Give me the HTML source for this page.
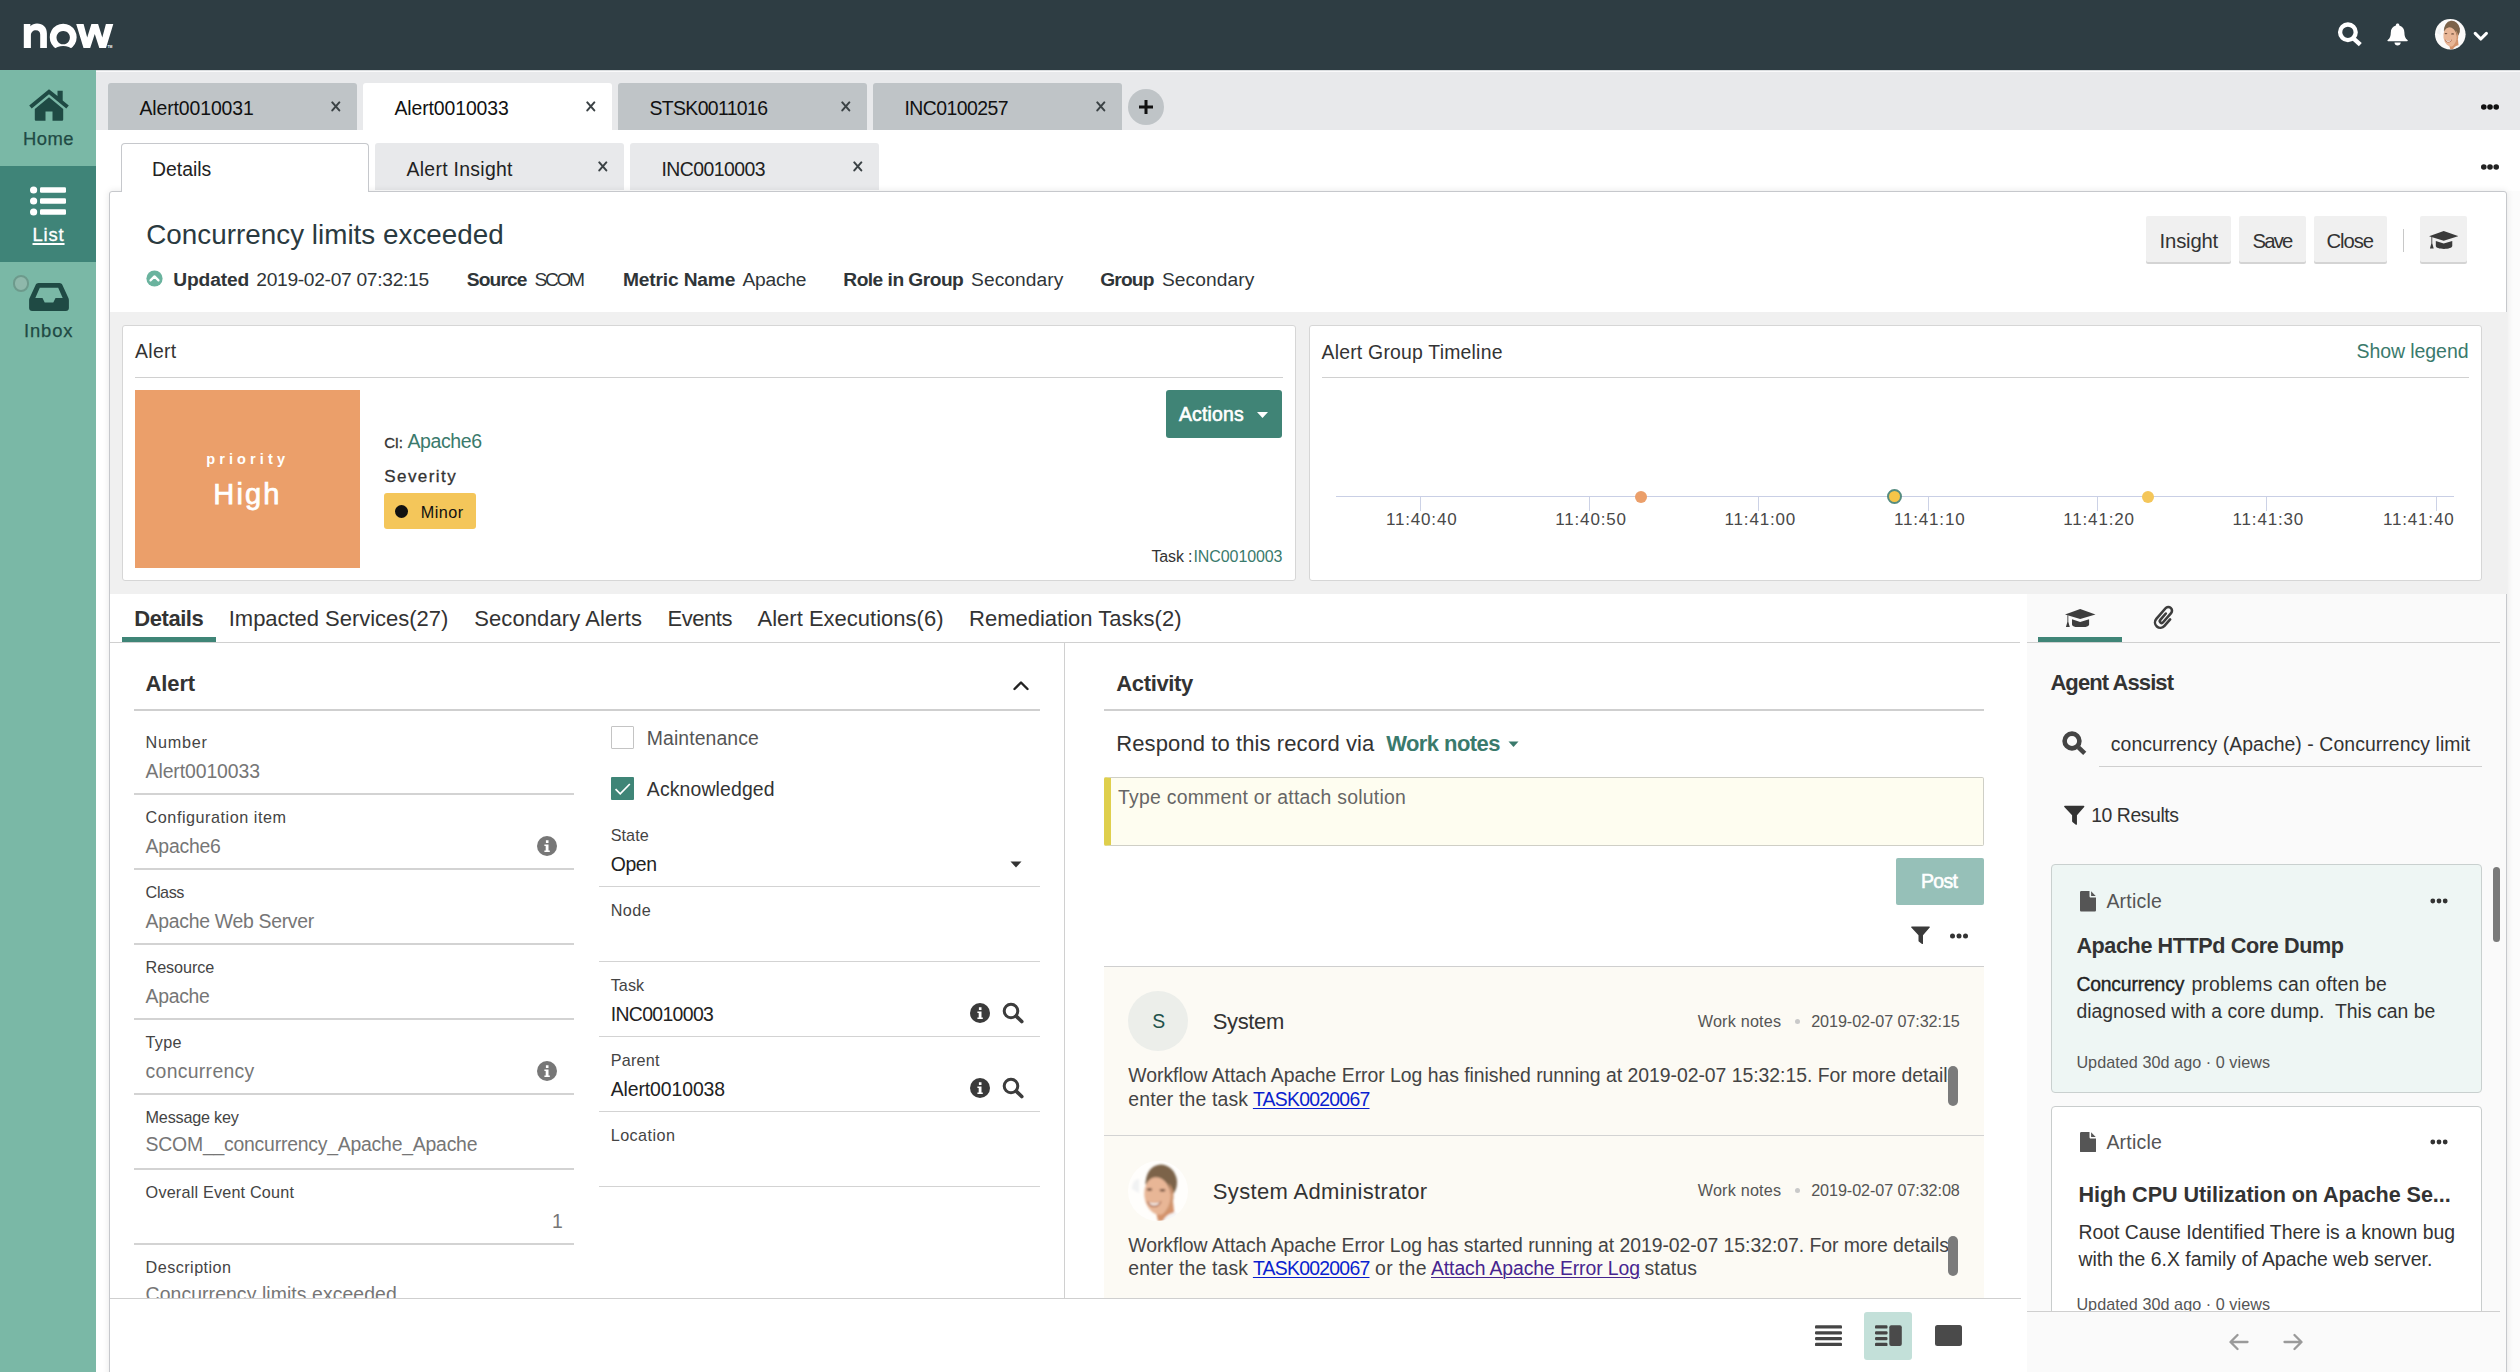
<!DOCTYPE html>
<html><head><meta charset="utf-8"><title>Alert0010033</title>
<style>
html,body{margin:0;padding:0;}
body{width:2520px;height:1372px;overflow:hidden;position:relative;background:#fff;font-family:"Liberation Sans",sans-serif;}
.b{position:absolute;box-sizing:border-box;display:block;}
.t{position:absolute;white-space:nowrap;line-height:1;display:block;}
a{color:inherit;}
</style></head><body>
<div class="b" style="left:0px;top:0px;width:2520px;height:70px;background:#2e3d43;"></div>
<div class="b" style="left:0px;top:70px;width:96px;height:1302px;background:#7ab8a6;"></div>
<div class="b" style="left:0px;top:166px;width:96px;height:96px;background:#3f8478;"></div>
<div class="b" style="left:96px;top:70px;width:2424px;height:60px;background:#e8e9eb;"></div>
<div class="b" style="left:96px;top:70px;width:2424px;height:1px;background:#d9dcde;"></div>
<div class="b" style="left:96px;top:71px;width:2424px;height:1px;background:#f9f9fa;"></div>
<div class="b" style="left:96px;top:130px;width:2424px;height:1242px;background:#fff;"></div>
<div class="b" style="left:2507px;top:191px;width:13px;height:1181px;background:#fcfcfc;"></div>
<div class="b" style="left:108px;top:83px;width:249px;height:47px;background:#bfc4c7;border-radius:3px 3px 0 0;"></div>
<div class="b" style="left:363px;top:83px;width:249px;height:47px;background:#fff;border-radius:3px 3px 0 0;"></div>
<div class="b" style="left:618px;top:83px;width:249px;height:47px;background:#bfc4c7;border-radius:3px 3px 0 0;"></div>
<div class="b" style="left:873px;top:83px;width:249px;height:47px;background:#bfc4c7;border-radius:3px 3px 0 0;"></div>
<div class="b" style="left:375px;top:143px;width:249px;height:47px;background:#e8e9eb;border-radius:3px 3px 0 0;"></div>
<div class="b" style="left:630px;top:143px;width:249px;height:47px;background:#e8e9eb;border-radius:3px 3px 0 0;"></div>
<div class="b" style="left:108.5px;top:190.5px;width:2398.5px;height:1190px;background:#fff;border:1px solid #c6c8cc;border-radius:3px 3px 0 0;box-shadow:0 0 7px rgba(0,0,0,0.10);"></div>
<div class="b" style="left:120.5px;top:143px;width:248.5px;height:49px;background:#fff;border:1px solid #c6c8cc;border-bottom:none;border-radius:4px 4px 0 0;"></div>
<div class="b" style="left:109.5px;top:312px;width:2397px;height:282px;background:#f0f0f0;"></div>
<div class="b" style="left:122px;top:324.5px;width:1173.5px;height:256.5px;background:#fff;border:1px solid #d6d6d6;border-radius:3px;"></div>
<div class="b" style="left:1308.5px;top:324.5px;width:1173.5px;height:256.5px;background:#fff;border:1px solid #d6d6d6;border-radius:3px;"></div>
<div class="b" style="left:2027px;top:594px;width:479px;height:778px;background:#fafafa;"></div>
<svg class="b" style="left:20px;top:20px;" width="100" height="30" viewBox="0 0 100 30">
<g fill="#fff">
<path d="M3.8 28.1V3.9h6.6v2.3C12 4.300 14.400 3.400 17 3.400c6 0 9.900 3.800 9.900 10V28.100h-6.700V14.800c0-3-1.500-4.600-4.300-4.600-2.900 0-5 2-5 5.200v12.700z"/>
<path fill-rule="evenodd" d="M43.2 3.800a13.450 13.450 0 1 0 0.010 0zM43.200 10.900a6.700 6.700 0 1 1-0.010 0z"/>
<path d="M56.2 3.900h7.400l3.600 13.600 4.200-13.600h6.700l4.200 13.600 3.600-13.600h7.400L86 28.100h-6.700l-4.550-14.100-4.550 14.100h-6.700z"/>
</g>
<circle cx="43.2" cy="41.2" r="15.2" fill="#2e3d43"/>
<text x="87.400" y="27.900" font-size="3.400" fill="#fff" font-family="Liberation Sans" font-weight="700">TM</text>
</svg>
<svg class="b" style="left:2330px;top:10px;" width="170" height="50" viewBox="2330 10 170 50">
<circle cx="2347.900" cy="32.300" r="7.800" fill="none" stroke="#fff" stroke-width="4.300"/>
<path d="M2353.600 38.600l6.700 6" stroke="#fff" stroke-width="4.300" stroke-linecap="butt"/>
<path fill="#fff" d="M2397.600 23.400c1 0 1.700.7 1.700 1.600v.5c3.200.9 5.100 3.600 5.100 7 0 3.900.9 5.900 3.100 7.600.5.400.3 1.200-.4 1.200h-19c-.7 0-.9-.8-.4-1.200 2.200-1.700 3.100-3.700 3.100-7.600 0-3.400 1.900-6.100 5.100-7v-.5c0-.9.700-1.600 1.700-1.600zM2394.500 42.500h6.200c0 1.700-1.400 3-3.100 3s-3.100-1.300-3.100-3z"/>

<path d="M2475.200 33.400l5.600 5.600 5.600-5.600" fill="none" stroke="#fff" stroke-width="3.100" stroke-linecap="round" stroke-linejoin="round"/>
</svg>
<svg class="b" style="left:2434.3999999999996px;top:18.3px;" width="32.6" height="32.6" viewBox="2434.3999999999996 18.3 32.6 32.6">
<defs><clipPath id="ch"><circle cx="2450.7" cy="34.6" r="15.3"/></clipPath><filter id="fh" x="-20%" y="-20%" width="140%" height="140%"><feGaussianBlur stdDeviation="0.800"/></filter></defs>
<g clip-path="url(#ch)"><rect x="2434.3999999999996" y="18.3" width="32.6" height="32.6" fill="#fbfaf9"/>
<g transform="translate(2435.3999999999996,19.3) scale(0.5100)" filter="url(#fh)">
<path d="M4 28c0-6 3-10 7-10v14z" fill="#f1f2f3"/>
<path d="M27 47l18-7 2 20H30z" fill="#d4926b"/>
<path d="M35 60c2-5 7-8 13-9l6 9z" fill="#f6f6f6"/>
<ellipse cx="33.500" cy="21" rx="15.500" ry="17.500" transform="rotate(-8 33.500 21)" fill="#7c634a"/>
<ellipse cx="29.800" cy="35" rx="13.300" ry="19" transform="rotate(-10 29.800 35)" fill="#e8b696"/>
<path d="M17.500 24c2-5 6-8 11-8.500 5-.5 10 1 13 5 1-4-1-8-5-10-5-2-12-1-16 3-2 3-3.500 7-3 10.500z" fill="#7c634a"/>
<path d="M40.500 22c2.500 6 3 13 1 20-1.500 5-4.500 9.500-8.500 13 7-3 11.500-9 12.500-18 .5-6-1-11-5-15z" fill="#cf956f"/>
<ellipse cx="21.500" cy="28.500" rx="2.800" ry="1.200" fill="#6b4a38"/><ellipse cx="34.500" cy="29.200" rx="3" ry="1.200" fill="#6b4a38"/>
<path d="M19 40c4 2.500 10 2.500 14.500 0-1 4-4 6-7.500 6s-6-2-7-6z" fill="#a8664a"/>
<path d="M20.500 41c3.500 1.600 8 1.600 11.500 0-1 2.300-3.200 3.400-5.800 3.400s-4.700-1.100-5.700-3.400z" fill="#fdf8f4"/>
</g></g></svg>
<svg class="b" style="left:28px;top:88px;" width="42" height="34" viewBox="0 0 42 34"><g fill="#1f4a44">
<path d="M21 1.200L1.200 17.400l2.500 3 17.300-14.200 17.300 14.200 2.500-3-6.100-5V2.800h-5.200v5.300z"/>
<path d="M21 9.300L6.800 21v10.400c0 .8.600 1.400 1.400 1.400h9.300v-9.200h7v9.200h9.300c.8 0 1.400-.6 1.400-1.400V21z"/></g></svg>
<span class="t" style="left:23.10px;top:130.00px;font-size:18.4px;color:#1f4a44;letter-spacing:0.473px;-webkit-text-stroke:0.250px #1f4a44;">Home</span>
<svg class="b" style="left:29px;top:185px;" width="38" height="32" viewBox="0 0 38 32"><g fill="#fff">
<circle cx="4.600" cy="5" r="3.600"/><circle cx="4.600" cy="16" r="3.600"/><circle cx="4.600" cy="27" r="3.600"/>
<rect x="11" y="2.200" width="26" height="5.600" rx="1.200"/><rect x="11" y="13.200" width="26" height="5.600" rx="1.200"/><rect x="11" y="24.200" width="26" height="5.600" rx="1.200"/></g></svg>
<span class="t" style="left:32.50px;top:226.00px;font-size:18.4px;color:#fff;letter-spacing:0.856px;-webkit-text-stroke:0.350px #fff;text-decoration:underline;text-decoration-thickness:1.500px;text-underline-offset:2px;">List</span>
<svg class="b" style="left:28px;top:282px;" width="42" height="30" viewBox="0 0 42 30"><path fill="#1f4a44" d="M10.500 1h21c1.200 0 2.300.7 2.800 1.800l6.200 13.500c.3.600.4 1.200.4 1.900V26c0 1.700-1.300 3-3 3H4.100c-1.700 0-3-1.300-3-3v-7.800c0-.7.100-1.300.4-1.900L7.700 2.800C8.200 1.700 9.300 1 10.500 1zm1.300 4.800L7.300 16h7.200l2.200 4.400h8.600l2.200-4.400h7.200L30.200 5.800z"/></svg>
<div class="b" style="left:12.5px;top:275px;width:16.5px;height:16.5px;background:#8fb8ab;border-radius:50%;border:2px solid #6d9a8c;"></div>
<span class="t" style="left:24.00px;top:322.00px;font-size:18.4px;color:#1f4a44;letter-spacing:0.872px;-webkit-text-stroke:0.250px #1f4a44;">Inbox</span>
<span class="t" style="left:139.50px;top:99.00px;font-size:19.4px;color:#111;letter-spacing:-0.100px;">Alert0010031</span>
<svg class="b" style="left:331.4px;top:100.9px;" width="10" height="11" viewBox="0 0 10 11"><path d="M1.300 1.400l7 8M8.300 1.400l-7 8" stroke="#3b4245" stroke-width="2" stroke-linecap="round" fill="none"/></svg>
<span class="t" style="left:394.50px;top:99.00px;font-size:19.4px;color:#111;letter-spacing:-0.100px;">Alert0010033</span>
<svg class="b" style="left:586.4px;top:100.9px;" width="10" height="11" viewBox="0 0 10 11"><path d="M1.300 1.400l7 8M8.300 1.400l-7 8" stroke="#3b4245" stroke-width="2" stroke-linecap="round" fill="none"/></svg>
<span class="t" style="left:649.50px;top:99.00px;font-size:19.4px;color:#111;letter-spacing:-0.625px;">STSK0011016</span>
<svg class="b" style="left:841.4px;top:100.9px;" width="10" height="11" viewBox="0 0 10 11"><path d="M1.300 1.400l7 8M8.300 1.400l-7 8" stroke="#3b4245" stroke-width="2" stroke-linecap="round" fill="none"/></svg>
<span class="t" style="left:904.50px;top:99.00px;font-size:19.4px;color:#111;letter-spacing:-0.547px;">INC0100257</span>
<svg class="b" style="left:1096.4px;top:100.9px;" width="10" height="11" viewBox="0 0 10 11"><path d="M1.300 1.400l7 8M8.300 1.400l-7 8" stroke="#3b4245" stroke-width="2" stroke-linecap="round" fill="none"/></svg>
<div class="b" style="left:1128px;top:88.5px;width:36px;height:36px;background:#bfc4c7;border-radius:50%;"></div>
<svg class="b" style="left:1138px;top:98.5px;" width="16" height="16" viewBox="0 0 16 16"><path d="M8 1v14M1 8h14" stroke="#111" stroke-width="3"/></svg>
<svg class="b" style="left:2480px;top:102.5px;" width="20" height="8" viewBox="0 0 20 8"><circle cx="3.8" cy="4" r="2.8" fill="#111"/><circle cx="10.0" cy="4" r="2.8" fill="#111"/><circle cx="16.2" cy="4" r="2.8" fill="#111"/></svg>
<svg class="b" style="left:2480px;top:162.5px;" width="20" height="8" viewBox="0 0 20 8"><circle cx="3.8" cy="4" r="2.8" fill="#222"/><circle cx="10.0" cy="4" r="2.8" fill="#222"/><circle cx="16.2" cy="4" r="2.8" fill="#222"/></svg>
<span class="t" style="left:152.00px;top:160.00px;font-size:19.4px;color:#222;">Details</span>
<span class="t" style="left:406.50px;top:160.00px;font-size:19.4px;color:#222;letter-spacing:0.297px;">Alert Insight</span>
<span class="t" style="left:661.50px;top:160.00px;font-size:19.4px;color:#222;letter-spacing:-0.547px;">INC0010003</span>
<svg class="b" style="left:598.2px;top:160.9px;" width="10" height="11" viewBox="0 0 10 11"><path d="M1.300 1.400l7 8M8.300 1.400l-7 8" stroke="#3b4245" stroke-width="2" stroke-linecap="round" fill="none"/></svg>
<svg class="b" style="left:853.2px;top:160.9px;" width="10" height="11" viewBox="0 0 10 11"><path d="M1.300 1.400l7 8M8.300 1.400l-7 8" stroke="#3b4245" stroke-width="2" stroke-linecap="round" fill="none"/></svg>
<span class="t" style="left:146.25px;top:221.00px;font-size:27.8px;color:#2a3a40;letter-spacing:0.022px;">Concurrency limits exceeded</span>
<svg class="b" style="left:145.5px;top:270px;" width="17" height="17" viewBox="0 0 17 17"><circle cx="8.500" cy="8.500" r="8.100" fill="#6ab39e"/><path d="M4.500 10.400l4-4 4 4" fill="none" stroke="#fff" stroke-width="2.200" stroke-linecap="round" stroke-linejoin="round"/></svg>
<span class="t" style="left:173.25px;top:270.00px;font-size:19.2px;color:#2f3538;font-weight:700;letter-spacing:-0.133px;">Updated</span>
<span class="t" style="left:256.25px;top:270.00px;font-size:19.2px;color:#2f3538;letter-spacing:-0.294px;">2019-02-07 07:32:15</span>
<span class="t" style="left:466.75px;top:270.00px;font-size:19.2px;color:#2f3538;font-weight:700;letter-spacing:-0.868px;">Source</span>
<span class="t" style="left:534.50px;top:270.00px;font-size:19.2px;color:#2f3538;letter-spacing:-2.367px;">SCOM</span>
<span class="t" style="left:623.00px;top:270.00px;font-size:19.2px;color:#2f3538;font-weight:700;letter-spacing:-0.168px;">Metric Name</span>
<span class="t" style="left:742.50px;top:270.00px;font-size:19.2px;color:#2f3538;letter-spacing:-0.225px;">Apache</span>
<span class="t" style="left:843.30px;top:270.00px;font-size:19.2px;color:#2f3538;font-weight:700;letter-spacing:-0.527px;">Role in Group</span>
<span class="t" style="left:971.10px;top:270.00px;font-size:19.2px;color:#2f3538;letter-spacing:0.050px;">Secondary</span>
<span class="t" style="left:1100.30px;top:270.00px;font-size:19.2px;color:#2f3538;font-weight:700;letter-spacing:-0.872px;">Group</span>
<span class="t" style="left:1161.90px;top:270.00px;font-size:19.2px;color:#2f3538;letter-spacing:0.088px;">Secondary</span>
<div class="b" style="left:2145.5px;top:216px;width:85.9px;height:46px;background:#f0f0f0;border-radius:2px;box-shadow:0 2px 0.500px rgba(0,0,0,0.170);"></div>
<div class="b" style="left:2238.6px;top:216px;width:67px;height:46px;background:#f0f0f0;border-radius:2px;box-shadow:0 2px 0.500px rgba(0,0,0,0.170);"></div>
<div class="b" style="left:2313.5px;top:216px;width:73.5px;height:46px;background:#f0f0f0;border-radius:2px;box-shadow:0 2px 0.500px rgba(0,0,0,0.170);"></div>
<div class="b" style="left:2420px;top:216px;width:46.7px;height:46px;background:#f0f0f0;border-radius:2px;box-shadow:0 2px 0.500px rgba(0,0,0,0.170);"></div>
<div class="b" style="left:2403px;top:228.5px;width:1px;height:23.0px;background:#c8c8c8;"></div>
<span class="t" style="left:2159.60px;top:231.00px;font-size:20.3px;color:#333;letter-spacing:-0.185px;">Insight</span>
<span class="t" style="left:2252.50px;top:231.00px;font-size:20.3px;color:#333;letter-spacing:-1.823px;">Save</span>
<span class="t" style="left:2326.50px;top:231.00px;font-size:20.3px;color:#333;letter-spacing:-1.100px;">Close</span>
<svg class="b" style="left:2428.8px;top:230.5px;" width="29.5" height="18" viewBox="0 0 30.500 18.700"><g fill="#3a3a3a"><path d="M0 5.400L15.200 0l15.300 5.400-15.300 4.700z"/><path d="M7 10.300l8.200 2.700 8.900-2.700v5.300c0 1.700-4 3-8.600 3S7 17.300 7 15.600z"/><path d="M2.400 6.300h.9v6.500l1.500 5.300H.900l1.500-5.300z"/></g></svg>
<span class="t" style="left:135.00px;top:342.00px;font-size:19.4px;color:#333;letter-spacing:0.340px;">Alert</span>
<div class="b" style="left:135px;top:376.7px;width:1147.5px;height:1.2px;background:#d0d0d0;"></div>
<div class="b" style="left:135px;top:390px;width:225px;height:178px;background:#eb9f6a;"></div>
<span class="t" style="left:206.25px;top:452.00px;font-size:14.5px;color:#fff;font-weight:700;letter-spacing:4.115px;">priority</span>
<span class="t" style="left:213.25px;top:480.00px;font-size:29.0px;color:#fff;letter-spacing:2.203px;-webkit-text-stroke:0.750px #fff;">High</span>
<span class="t" style="left:384.25px;top:435.00px;font-size:15.0px;color:#333;letter-spacing:-0.209px;-webkit-text-stroke:0.300px #333;">CI:</span>
<span class="t" style="left:407.50px;top:432.00px;font-size:19.5px;color:#3a7a6c;letter-spacing:-0.413px;">Apache6</span>
<span class="t" style="left:384.25px;top:468.00px;font-size:17.0px;color:#333;letter-spacing:1.442px;-webkit-text-stroke:0.300px #333;">Severity</span>
<div class="b" style="left:384.25px;top:493.25px;width:91.25px;height:35.5px;background:#f4c65a;border-radius:3px;"></div>
<div class="b" style="left:395.25px;top:505.25px;width:13px;height:13px;background:#111;border-radius:50%;"></div>
<span class="t" style="left:420.75px;top:504.00px;font-size:16.2px;color:#111;letter-spacing:0.498px;">Minor</span>
<div class="b" style="left:1166px;top:390px;width:116px;height:47.5px;background:#408476;border-radius:3px;"></div>
<span class="t" style="left:1179.00px;top:405.00px;font-size:19.4px;color:#fff;letter-spacing:0.180px;-webkit-text-stroke:0.600px #fff;">Actions</span>
<svg class="b" style="left:1256px;top:411px;" width="13" height="8" viewBox="0 0 13 8"><path d="M1 1h11L6.500 7z" fill="#fff"/></svg>
<span class="t" style="left:1151.50px;top:549.00px;font-size:16.0px;color:#333;letter-spacing:-0.158px;">Task :</span>
<span class="t" style="left:1193.50px;top:549.00px;font-size:16.0px;color:#3a7a6c;letter-spacing:-0.094px;">INC0010003</span>
<span class="t" style="left:1321.50px;top:343.00px;font-size:19.4px;color:#333;letter-spacing:0.220px;">Alert Group Timeline</span>
<span class="t" style="left:2356.50px;top:342.00px;font-size:19.5px;color:#3a7a6c;letter-spacing:-0.075px;">Show legend</span>
<div class="b" style="left:1321.5px;top:376.7px;width:1147.0px;height:1.2px;background:#d0d0d0;"></div>
<div class="b" style="left:1336px;top:496px;width:1118px;height:1px;background:#c9cfe5;"></div>
<div class="b" style="left:1419.7px;top:497px;width:1.2px;height:14.300000000000011px;background:#ccd2e6;"></div>
<span class="t" style="left:1386.00px;top:511.00px;font-size:17.0px;color:#484848;letter-spacing:0.814px;">11:40:40</span>
<div class="b" style="left:1589.0px;top:497px;width:1.2px;height:14.300000000000011px;background:#ccd2e6;"></div>
<span class="t" style="left:1555.30px;top:511.00px;font-size:17.0px;color:#484848;letter-spacing:0.814px;">11:40:50</span>
<div class="b" style="left:1758.3px;top:497px;width:1.2px;height:14.300000000000011px;background:#ccd2e6;"></div>
<span class="t" style="left:1724.60px;top:511.00px;font-size:17.0px;color:#484848;letter-spacing:0.814px;">11:41:00</span>
<div class="b" style="left:1927.7px;top:497px;width:1.2px;height:14.300000000000011px;background:#ccd2e6;"></div>
<span class="t" style="left:1894.00px;top:511.00px;font-size:17.0px;color:#484848;letter-spacing:0.814px;">11:41:10</span>
<div class="b" style="left:2097.0px;top:497px;width:1.2px;height:14.300000000000011px;background:#ccd2e6;"></div>
<span class="t" style="left:2063.30px;top:511.00px;font-size:17.0px;color:#484848;letter-spacing:0.814px;">11:41:20</span>
<div class="b" style="left:2266.2999999999997px;top:497px;width:1.2px;height:14.300000000000011px;background:#ccd2e6;"></div>
<span class="t" style="left:2232.60px;top:511.00px;font-size:17.0px;color:#484848;letter-spacing:0.814px;">11:41:30</span>
<div class="b" style="left:2435.7px;top:497px;width:1.2px;height:14.300000000000011px;background:#ccd2e6;"></div>
<span class="t" style="left:2383.00px;top:511.00px;font-size:17.0px;color:#484848;letter-spacing:0.814px;">11:41:40</span>
<div class="b" style="left:1635px;top:490.5px;width:12px;height:12px;background:#eb9f6a;border-radius:50%;"></div>
<div class="b" style="left:1886.9px;top:488.9px;width:15px;height:15px;background:#f6c548;border-radius:50%;border:2px solid #568c80;"></div>
<div class="b" style="left:2141.5px;top:490.5px;width:12px;height:12px;background:#f4c65a;border-radius:50%;"></div>
<span class="t" style="left:134.25px;top:608.00px;font-size:22.0px;color:#333;font-weight:700;letter-spacing:-0.441px;">Details</span>
<span class="t" style="left:228.75px;top:608.00px;font-size:22.0px;color:#333;letter-spacing:-0.029px;">Impacted Services(27)</span>
<span class="t" style="left:474.25px;top:608.00px;font-size:22.0px;color:#333;letter-spacing:0.096px;">Secondary Alerts</span>
<span class="t" style="left:667.50px;top:608.00px;font-size:22.0px;color:#333;letter-spacing:-0.452px;">Events</span>
<span class="t" style="left:757.50px;top:608.00px;font-size:22.0px;color:#333;letter-spacing:0.008px;">Alert Executions(6)</span>
<span class="t" style="left:969.00px;top:608.00px;font-size:22.0px;color:#333;letter-spacing:0.008px;">Remediation Tasks(2)</span>
<div class="b" style="left:109.5px;top:642px;width:1910.5px;height:1.2px;background:#d0d0d0;"></div>
<div class="b" style="left:121.75px;top:637px;width:94px;height:5px;background:#3f8577;"></div>
<div class="b" style="left:2027px;top:642px;width:473px;height:1.2px;background:#d0d0d0;"></div>
<div class="b" style="left:2038.2px;top:637.3px;width:84px;height:4.7px;background:#3f8577;"></div>
<svg class="b" style="left:2065.1px;top:608.7px;" width="30.5" height="18.7" viewBox="0 0 30.500 18.700"><g fill="#3d3d3d"><path d="M0 5.400L15.200 0l15.300 5.400-15.300 4.700z"/><path d="M7 10.300l8.200 2.700 8.900-2.700v5.300c0 1.700-4 3-8.600 3S7 17.300 7 15.600z"/><path d="M2.400 6.300h.9v6.500l1.500 5.300H.900l1.500-5.300z"/></g></svg>
<svg class="b" style="left:2150px;top:603px;" width="30" height="30" viewBox="2150 603 30 30"><g transform="translate(2164.300,617.900) rotate(41) scale(1.080)"><path d="M5 -2.500V5.500A5 5 0 0 1 -5 5.500V-7.500A3.400 3.400 0 0 1 1.800 -7.500V3.800A1.700 1.700 0 0 1 -1.600 3.800V-4" fill="none" stroke="#3d3d3d" stroke-width="2.400" stroke-linecap="round"/></g></svg>
<div class="b" style="left:1064px;top:642.5px;width:1.2px;height:656.0px;background:#d0d0d0;"></div>
<span class="t" style="left:145.60px;top:673.00px;font-size:22.0px;color:#333;font-weight:700;letter-spacing:-0.131px;">Alert</span>
<svg class="b" style="left:1011.5px;top:678.5px;" width="18" height="13" viewBox="0 0 18 13"><path d="M2.500 10l6.500-6.500 6.500 6.500" fill="none" stroke="#222" stroke-width="2.400" stroke-linecap="round" stroke-linejoin="round"/></svg>
<div class="b" style="left:133.7px;top:709.3px;width:906.0px;height:1.3px;background:#cfcfcf;"></div>
<span class="t" style="left:145.60px;top:734.00px;font-size:16.2px;color:#444;letter-spacing:0.756px;">Number</span>
<span class="t" style="left:145.60px;top:762.00px;font-size:19.4px;color:#767676;letter-spacing:-0.091px;">Alert0010033</span>
<div class="b" style="left:133.7px;top:793.3000000000001px;width:440.50000000000006px;height:1.3px;background:#d3d3d3;"></div>
<span class="t" style="left:145.60px;top:809.00px;font-size:16.2px;color:#444;letter-spacing:0.531px;">Configuration item</span>
<span class="t" style="left:145.60px;top:837.00px;font-size:19.4px;color:#767676;letter-spacing:-0.214px;">Apache6</span>
<div class="b" style="left:133.7px;top:868.3000000000001px;width:440.50000000000006px;height:1.3px;background:#d3d3d3;"></div>
<svg class="b" style="left:537.2px;top:835.6px;" width="20" height="20" viewBox="0 0 20 20"><circle cx="10" cy="10" r="10" fill="#777"/><path d="M8.900 4.300h2.600v2.700H8.900zM7.400 8.500h4.100v5.900h1.300v1.600H7.400v-1.600h1.300v-4.300H7.400z" fill="#fff"/></svg>
<span class="t" style="left:145.60px;top:884.00px;font-size:16.2px;color:#444;letter-spacing:-0.402px;">Class</span>
<span class="t" style="left:145.60px;top:912.00px;font-size:19.4px;color:#767676;letter-spacing:-0.284px;">Apache Web Server</span>
<div class="b" style="left:133.7px;top:943.3000000000001px;width:440.50000000000006px;height:1.3px;background:#d3d3d3;"></div>
<span class="t" style="left:145.60px;top:959.00px;font-size:16.2px;color:#444;letter-spacing:-0.091px;">Resource</span>
<span class="t" style="left:145.60px;top:987.00px;font-size:19.4px;color:#767676;letter-spacing:-0.299px;">Apache</span>
<div class="b" style="left:133.7px;top:1018.3000000000001px;width:440.50000000000006px;height:1.3px;background:#d3d3d3;"></div>
<span class="t" style="left:145.60px;top:1034.00px;font-size:16.2px;color:#444;letter-spacing:0.259px;">Type</span>
<span class="t" style="left:145.60px;top:1062.00px;font-size:19.4px;color:#767676;letter-spacing:0.304px;">concurrency</span>
<div class="b" style="left:133.7px;top:1093.3px;width:440.50000000000006px;height:1.3px;background:#d3d3d3;"></div>
<svg class="b" style="left:537.2px;top:1060.6px;" width="20" height="20" viewBox="0 0 20 20"><circle cx="10" cy="10" r="10" fill="#777"/><path d="M8.900 4.300h2.600v2.700H8.900zM7.400 8.500h4.100v5.900h1.300v1.600H7.400v-1.600h1.300v-4.300H7.400z" fill="#fff"/></svg>
<span class="t" style="left:145.60px;top:1109.00px;font-size:16.2px;color:#444;letter-spacing:-0.215px;">Message key</span>
<span class="t" style="left:145.60px;top:1135.00px;font-size:19.4px;color:#767676;letter-spacing:-0.220px;">SCOM__concurrency_Apache_Apache</span>
<div class="b" style="left:133.7px;top:1168.3px;width:440.50000000000006px;height:1.3px;background:#d3d3d3;"></div>
<span class="t" style="left:145.60px;top:1184.00px;font-size:16.2px;color:#444;letter-spacing:0.195px;">Overall Event Count</span>
<div class="b" style="left:133.7px;top:1243.3px;width:440.50000000000006px;height:1.3px;background:#d3d3d3;"></div>
<span class="t" style="left:145.60px;top:1259.00px;font-size:16.2px;color:#444;letter-spacing:0.446px;">Description</span>
<span class="t" style="left:145.60px;top:1285.00px;font-size:19.4px;color:#767676;letter-spacing:0.082px;">Concurrency limits exceeded</span>
<span class="t" style="left:552.00px;top:1212.00px;font-size:19.4px;color:#767676;">1</span>
<div class="b" style="left:610.7px;top:726px;width:23.3px;height:23.3px;background:#fff;border:1.300px solid #c4c4c4;border-radius:1px;"></div>
<span class="t" style="left:646.80px;top:729.00px;font-size:19.4px;color:#555;letter-spacing:0.092px;">Maintenance</span>
<div class="b" style="left:610.7px;top:777px;width:23.3px;height:23.3px;background:#3f8577;border-radius:1px;"></div>
<svg class="b" style="left:610.7px;top:777px;" width="23.3" height="23.3" viewBox="0 0 23 23"><path d="M4.500 12l4.600 4.600 9.500-9.700" fill="none" stroke="#fff" stroke-width="1.700"/></svg>
<span class="t" style="left:646.80px;top:780.00px;font-size:19.4px;color:#333;letter-spacing:0.147px;">Acknowledged</span>
<span class="t" style="left:610.70px;top:827.00px;font-size:16.2px;color:#444;letter-spacing:0.067px;">State</span>
<span class="t" style="left:610.70px;top:855.00px;font-size:19.4px;color:#222;letter-spacing:-0.385px;">Open</span>
<svg class="b" style="left:1009.5px;top:861px;" width="12" height="7" viewBox="0 0 12 7"><path d="M.500.500h11L6 6.500z" fill="#333"/></svg>
<div class="b" style="left:598.8px;top:886px;width:440.9000000000001px;height:1.3px;background:#d3d3d3;"></div>
<span class="t" style="left:610.70px;top:902.00px;font-size:16.2px;color:#444;letter-spacing:0.423px;">Node</span>
<div class="b" style="left:598.8px;top:961px;width:440.9000000000001px;height:1.3px;background:#d3d3d3;"></div>
<span class="t" style="left:610.70px;top:977.00px;font-size:16.2px;color:#444;letter-spacing:0.063px;">Task</span>
<span class="t" style="left:610.70px;top:1005.00px;font-size:19.4px;color:#222;letter-spacing:-0.636px;">INC0010003</span>
<svg class="b" style="left:969.5px;top:1003.4px;" width="20" height="20" viewBox="0 0 20 20"><circle cx="10" cy="10" r="10" fill="#3a3a3a"/><path d="M8.900 4.300h2.600v2.700H8.900zM7.400 8.500h4.100v5.900h1.300v1.600H7.400v-1.600h1.300v-4.300H7.400z" fill="#fff"/></svg>
<svg class="b" style="left:990.5px;top:991.4px;" width="40" height="40" viewBox="990.5 991.4 40 40"><circle cx="1010.5" cy="1011.4" r="6.8" fill="none" stroke="#3c3c3c" stroke-width="3"/><path d="M1015.94 1016.84L1021.24 1021.93" stroke="#3c3c3c" stroke-width="3.7" stroke-linecap="round"/></svg>
<div class="b" style="left:598.8px;top:1036px;width:440.9000000000001px;height:1.3px;background:#d3d3d3;"></div>
<span class="t" style="left:610.70px;top:1052.00px;font-size:16.2px;color:#444;letter-spacing:0.213px;">Parent</span>
<span class="t" style="left:610.70px;top:1080.00px;font-size:19.4px;color:#222;letter-spacing:-0.091px;">Alert0010038</span>
<svg class="b" style="left:969.5px;top:1078.4px;" width="20" height="20" viewBox="0 0 20 20"><circle cx="10" cy="10" r="10" fill="#3a3a3a"/><path d="M8.900 4.300h2.600v2.700H8.900zM7.400 8.500h4.100v5.900h1.300v1.600H7.400v-1.600h1.300v-4.300H7.400z" fill="#fff"/></svg>
<svg class="b" style="left:990.5px;top:1066.4px;" width="40" height="40" viewBox="990.5 1066.4 40 40"><circle cx="1010.5" cy="1086.4" r="6.8" fill="none" stroke="#3c3c3c" stroke-width="3"/><path d="M1015.94 1091.84L1021.24 1096.93" stroke="#3c3c3c" stroke-width="3.7" stroke-linecap="round"/></svg>
<div class="b" style="left:598.8px;top:1111px;width:440.9000000000001px;height:1.3px;background:#d3d3d3;"></div>
<span class="t" style="left:610.70px;top:1127.00px;font-size:16.2px;color:#444;letter-spacing:0.435px;">Location</span>
<div class="b" style="left:598.8px;top:1185.5px;width:440.9000000000001px;height:1.3px;background:#d3d3d3;"></div>
<div class="b" style="left:109.5px;top:1298.5px;width:1917.5px;height:80px;background:#fff;"></div>
<div class="b" style="left:109.5px;top:1298.2px;width:1911.0px;height:1.3px;background:#cfcfcf;"></div>
<span class="t" style="left:1116.30px;top:673.00px;font-size:22.0px;color:#333;font-weight:700;letter-spacing:-0.353px;">Activity</span>
<div class="b" style="left:1104px;top:709.3px;width:879.8px;height:1.3px;background:#cfcfcf;"></div>
<span class="t" style="left:1116.30px;top:733.00px;font-size:22.0px;color:#333;letter-spacing:0.097px;">Respond to this record via</span>
<span class="t" style="left:1386.20px;top:733.00px;font-size:22.0px;color:#3a7a6c;font-weight:700;letter-spacing:-0.565px;">Work notes</span>
<svg class="b" style="left:1507.5px;top:741px;" width="11" height="7" viewBox="0 0 11 7"><path d="M.500.500h10L5.500 6z" fill="#3a7a6c"/></svg>
<div class="b" style="left:1104px;top:777px;width:880px;height:68.5px;background:#fefdf0;border:1px solid #cfcfc6;border-left:7px solid #dfcf4c;border-radius:2px;"></div>
<span class="t" style="left:1118.00px;top:788.00px;font-size:19.4px;color:#666;letter-spacing:0.255px;">Type comment or attach solution</span>
<div class="b" style="left:1896px;top:858px;width:88px;height:47px;background:#96c0b8;border-radius:2px;"></div>
<span class="t" style="left:1921.00px;top:872.00px;font-size:19.5px;color:#fff;letter-spacing:-0.673px;-webkit-text-stroke:0.550px #fff;">Post</span>
<svg class="b" style="left:1910.5px;top:926px;" width="19" height="18.5" viewBox="0 0 19 18.500"><g fill="#3a3a3a"><path d="M.800.500h17.400c.6 0 .9.700.5 1.100L12 9.200v8.300c0 .5-.6.800-1 .5l-3.200-2.500c-.2-.1-.3-.4-.3-.600V9.200L.300 1.600C-.100 1.200.200.500.800.500z"/></g></svg>
<svg class="b" style="left:1948.7px;top:931.6px;" width="20" height="8" viewBox="0 0 20 8"><circle cx="3.5" cy="4" r="2.5" fill="#333"/><circle cx="10.0" cy="4" r="2.5" fill="#333"/><circle cx="16.5" cy="4" r="2.5" fill="#333"/></svg>
<div class="b" style="left:1104px;top:965.8px;width:879.8px;height:1.3px;background:#cfcfcf;"></div>
<div class="b" style="left:1104px;top:967px;width:880px;height:168px;background:#fcfaf4;"></div>
<div class="b" style="left:1104px;top:1136.3px;width:880px;height:162px;background:#fcfaf4;"></div>
<div class="b" style="left:1104px;top:1135px;width:879.8px;height:1.3px;background:#d3d3d3;"></div>
<div class="b" style="left:1128px;top:991.4px;width:60px;height:60px;background:#eceeea;border-radius:50%;"></div>
<span class="t" style="left:1152.20px;top:1012.00px;font-size:19.4px;color:#23524a;">S</span>
<span class="t" style="left:1212.80px;top:1011.00px;font-size:22.0px;color:#333;letter-spacing:-0.370px;">System</span>
<span class="t" style="left:1697.70px;top:1013.00px;font-size:16.2px;color:#555;letter-spacing:0.207px;">Work notes</span>
<div class="b" style="left:1794.5px;top:1018.8px;width:5px;height:5px;background:#c9c9c9;border-radius:50%;"></div>
<span class="t" style="left:1811.20px;top:1013.00px;font-size:16.2px;color:#555;letter-spacing:-0.092px;">2019-02-07 07:32:15</span>
<span class="t" style="left:1128.30px;top:1066.00px;font-size:19.4px;color:#444;letter-spacing:-0.030px;">Workflow Attach Apache Error Log has finished running at 2019-02-07 15:32:15. For more details</span>
<span class="t" style="left:1128.30px;top:1090.00px;font-size:19.4px;color:#444;letter-spacing:0.166px;">enter the task</span>
<span class="t" style="left:1252.90px;top:1090.00px;font-size:19.4px;color:#0a1fcf;letter-spacing:-0.735px;text-decoration:underline;text-decoration-thickness:1.300px;text-underline-offset:1.500px;">TASK0020067</span>
<div class="b" style="left:1947.7px;top:1066.3px;width:10px;height:40px;background:#7b7b7b;border-radius:5px;"></div>
<svg class="b" style="left:1127px;top:1159.9px;" width="62" height="62" viewBox="1127 1159.9 62 62">
<defs><clipPath id="ce"><circle cx="1158" cy="1190.9" r="30"/></clipPath><filter id="fe" x="-20%" y="-20%" width="140%" height="140%"><feGaussianBlur stdDeviation="0.800"/></filter></defs>
<g clip-path="url(#ce)"><rect x="1127" y="1159.9" width="62" height="62" fill="#fffefc"/>
<g transform="translate(1128,1160.9) scale(1.0000)" filter="url(#fe)">
<path d="M4 28c0-6 3-10 7-10v14z" fill="#f1f2f3"/>
<path d="M27 47l18-7 2 20H30z" fill="#d4926b"/>
<path d="M35 60c2-5 7-8 13-9l6 9z" fill="#f6f6f6"/>
<ellipse cx="33.500" cy="21" rx="15.500" ry="17.500" transform="rotate(-8 33.500 21)" fill="#7c634a"/>
<ellipse cx="29.800" cy="35" rx="13.300" ry="19" transform="rotate(-10 29.800 35)" fill="#e8b696"/>
<path d="M17.500 24c2-5 6-8 11-8.500 5-.5 10 1 13 5 1-4-1-8-5-10-5-2-12-1-16 3-2 3-3.500 7-3 10.500z" fill="#7c634a"/>
<path d="M40.500 22c2.500 6 3 13 1 20-1.500 5-4.500 9.500-8.500 13 7-3 11.500-9 12.500-18 .5-6-1-11-5-15z" fill="#cf956f"/>
<ellipse cx="21.500" cy="28.500" rx="2.800" ry="1.200" fill="#6b4a38"/><ellipse cx="34.500" cy="29.200" rx="3" ry="1.200" fill="#6b4a38"/>
<path d="M19 40c4 2.500 10 2.500 14.500 0-1 4-4 6-7.500 6s-6-2-7-6z" fill="#a8664a"/>
<path d="M20.500 41c3.500 1.600 8 1.600 11.500 0-1 2.300-3.200 3.400-5.800 3.400s-4.700-1.100-5.700-3.400z" fill="#fdf8f4"/>
</g></g></svg>
<span class="t" style="left:1212.80px;top:1181.00px;font-size:22.0px;color:#333;letter-spacing:0.340px;">System Administrator</span>
<span class="t" style="left:1697.70px;top:1182.00px;font-size:16.2px;color:#555;letter-spacing:0.207px;">Work notes</span>
<div class="b" style="left:1794.5px;top:1188.2px;width:5px;height:5px;background:#c9c9c9;border-radius:50%;"></div>
<span class="t" style="left:1811.20px;top:1182.00px;font-size:16.2px;color:#555;letter-spacing:-0.092px;">2019-02-07 07:32:08</span>
<span class="t" style="left:1128.30px;top:1236.00px;font-size:19.4px;color:#444;letter-spacing:-0.039px;">Workflow Attach Apache Error Log has started running at 2019-02-07 15:32:07. For more details</span>
<span class="t" style="left:1128.30px;top:1259.00px;font-size:19.4px;color:#444;letter-spacing:0.166px;">enter the task</span>
<span class="t" style="left:1252.90px;top:1259.00px;font-size:19.4px;color:#0a1fcf;letter-spacing:-0.735px;text-decoration:underline;text-decoration-thickness:1.300px;text-underline-offset:1.500px;">TASK0020067</span>
<span class="t" style="left:1375.00px;top:1259.00px;font-size:19.4px;color:#444;letter-spacing:0.379px;">or the</span>
<span class="t" style="left:1431.00px;top:1259.00px;font-size:19.4px;color:#47258f;letter-spacing:-0.107px;text-decoration:underline;text-decoration-thickness:1.300px;text-underline-offset:1.500px;">Attach Apache Error Log</span>
<span class="t" style="left:1644.50px;top:1259.00px;font-size:19.4px;color:#444;letter-spacing:0.149px;">status</span>
<div class="b" style="left:1947.7px;top:1235.7px;width:10px;height:40px;background:#7b7b7b;border-radius:5px;"></div>
<div class="b" style="left:1065px;top:1299.5px;width:962px;height:80px;background:#fff;"></div>
<div class="b" style="left:109.5px;top:1298.2px;width:1911.0px;height:1.3px;background:#cfcfcf;"></div>
<svg class="b" style="left:1815px;top:1325px;" width="27" height="21" viewBox="0 0 27 21"><rect x="0" y="0.3" width="27" height="3.300" rx="1.200" fill="#454545"/><rect x="0" y="6.15" width="27" height="3.300" rx="1.200" fill="#454545"/><rect x="0" y="12" width="27" height="3.300" rx="1.200" fill="#454545"/><rect x="0" y="17.85" width="27" height="3.300" rx="1.200" fill="#454545"/></svg>
<div class="b" style="left:1864.3px;top:1312.1px;width:47.7px;height:47.8px;background:#c3e0d9;border-radius:3px;"></div>
<svg class="b" style="left:1875px;top:1325px;" width="27" height="21" viewBox="0 0 27 21"><rect x="0" y="0.3" width="12.500" height="3.300" rx="1.200" fill="#454545"/><rect x="0" y="6.15" width="12.500" height="3.300" rx="1.200" fill="#454545"/><rect x="0" y="12" width="12.500" height="3.300" rx="1.200" fill="#454545"/><rect x="0" y="17.85" width="12.500" height="3.300" rx="1.200" fill="#454545"/><rect x="14.300" y="0.300" width="12.500" height="20.700" rx="2" fill="#4a4a4a"/></svg>
<div class="b" style="left:1935px;top:1325.1px;width:26.8px;height:20.8px;background:#4a4a4a;border-radius:2.500px;"></div>
<span class="t" style="left:2050.40px;top:672.00px;font-size:22.0px;color:#333;font-weight:700;letter-spacing:-0.914px;">Agent Assist</span>
<svg class="b" style="left:2052.3px;top:721.4px;" width="40" height="40" viewBox="2052.3 721.4 40 40"><circle cx="2072.3" cy="741.4" r="7.4" fill="none" stroke="#444" stroke-width="4.6"/><path d="M2078.73 747.83L2085.03 753.88" stroke="#444" stroke-width="4.5" stroke-linecap="butt"/></svg>
<span class="t" style="left:2110.80px;top:735.00px;font-size:19.4px;color:#333;letter-spacing:0.071px;">concurrency (Apache) - Concurrency limit</span>
<div class="b" style="left:2098.5px;top:766px;width:383.9000000000001px;height:1.3px;background:#cfcfcf;"></div>
<svg class="b" style="left:2064px;top:805.3px;" width="20.5" height="20.5" viewBox="0 0 19 18.500"><g fill="#333"><path d="M.800.500h17.400c.6 0 .9.700.5 1.100L12 9.200v8.300c0 .5-.6.800-1 .5l-3.200-2.500c-.2-.1-.3-.4-.3-.600V9.200L.300 1.600C-.100 1.200.200.500.800.500z"/></g></svg>
<span class="t" style="left:2091.20px;top:806.00px;font-size:19.4px;color:#333;letter-spacing:-0.428px;">10 Results</span>
<div class="b" style="left:2051px;top:864px;width:431px;height:228.5px;background:#eef6f4;border:1px solid #c9d0cf;border-radius:4px;"></div>
<svg class="b" style="left:2079.6px;top:891px;" width="16" height="20.5" viewBox="0 0 16 20.500"><path d="M1.300 0h8.200v5.300c0 .7.6 1.300 1.300 1.300H16v12.600c0 .7-.6 1.300-1.300 1.300H1.300C.6 20.500 0 19.900 0 19.200V1.300C0 .6.600 0 1.300 0zm9.800.300L15.700 5h-4.600z" fill="#555"/></svg>
<span class="t" style="left:2106.40px;top:892.00px;font-size:19.5px;color:#555;letter-spacing:0.204px;">Article</span>
<svg class="b" style="left:2429px;top:897.2px;" width="20" height="8" viewBox="0 0 20 8"><circle cx="3.8" cy="4" r="2.4" fill="#333"/><circle cx="10.0" cy="4" r="2.4" fill="#333"/><circle cx="16.2" cy="4" r="2.4" fill="#333"/></svg>
<span class="t" style="left:2076.40px;top:935.00px;font-size:21.6px;color:#333;font-weight:700;letter-spacing:-0.401px;">Apache HTTPd Core Dump</span>
<span class="t" style="left:2076.40px;top:975.00px;font-size:19.4px;color:#222;letter-spacing:-0.197px;-webkit-text-stroke:0.350px #222;">Concurrency</span>
<span class="t" style="left:2191.40px;top:975.00px;font-size:19.4px;color:#333;letter-spacing:0.173px;">problems can often be</span>
<span class="t" style="left:2076.40px;top:1002.00px;font-size:19.4px;color:#333;letter-spacing:0.007px;white-space:pre;">diagnosed with a core dump.  This can be</span>
<span class="t" style="left:2076.40px;top:1054.00px;font-size:16.2px;color:#555;letter-spacing:0.044px;">Updated 30d ago · 0 views</span>
<div class="b" style="left:2051px;top:1105.5px;width:431px;height:240px;background:#fff;border:1px solid #c9cdcd;border-radius:4px;"></div>
<svg class="b" style="left:2079.6px;top:1131.7px;" width="16" height="20.5" viewBox="0 0 16 20.500"><path d="M1.300 0h8.200v5.300c0 .7.6 1.300 1.300 1.300H16v12.600c0 .7-.6 1.300-1.300 1.300H1.300C.6 20.500 0 19.900 0 19.200V1.300C0 .6.600 0 1.300 0zm9.800.300L15.700 5h-4.600z" fill="#555"/></svg>
<span class="t" style="left:2106.40px;top:1133.00px;font-size:19.5px;color:#555;letter-spacing:0.204px;">Article</span>
<svg class="b" style="left:2429px;top:1138.3px;" width="20" height="8" viewBox="0 0 20 8"><circle cx="3.8" cy="4" r="2.4" fill="#333"/><circle cx="10.0" cy="4" r="2.4" fill="#333"/><circle cx="16.2" cy="4" r="2.4" fill="#333"/></svg>
<span class="t" style="left:2078.50px;top:1184.00px;font-size:21.6px;color:#333;font-weight:700;letter-spacing:-0.072px;">High CPU Utilization on Apache Se...</span>
<span class="t" style="left:2078.50px;top:1223.00px;font-size:19.4px;color:#333;letter-spacing:-0.009px;">Root Cause Identified There is a known bug</span>
<span class="t" style="left:2078.50px;top:1250.00px;font-size:19.4px;color:#333;letter-spacing:0.008px;">with the 6.X family of Apache web server.</span>
<span class="t" style="left:2076.40px;top:1296.00px;font-size:16.2px;color:#555;letter-spacing:0.044px;">Updated 30d ago · 0 views</span>
<div class="b" style="left:2493.2px;top:867px;width:7px;height:75.3px;background:#7a7a7a;border-radius:3.500px;"></div>
<div class="b" style="left:2027px;top:1311.5px;width:479px;height:70px;background:#fafafa;"></div>
<div class="b" style="left:2027px;top:1310.7px;width:473px;height:1.3px;background:#cfcfcf;"></div>
<svg class="b" style="left:2229.3px;top:1333px;" width="20" height="18" viewBox="0 0 20 18"><path d="M18.500 9H2M8.500 2L1.500 9l7 7" fill="none" stroke="#9a9a9a" stroke-width="2.300" stroke-linecap="round" stroke-linejoin="round"/></svg>
<svg class="b" style="left:2283.3px;top:1333px;" width="20" height="18" viewBox="0 0 20 18"><path d="M1.500 9H18M11.500 2l7 7-7 7" fill="none" stroke="#9a9a9a" stroke-width="2.300" stroke-linecap="round" stroke-linejoin="round"/></svg>
</body></html>
